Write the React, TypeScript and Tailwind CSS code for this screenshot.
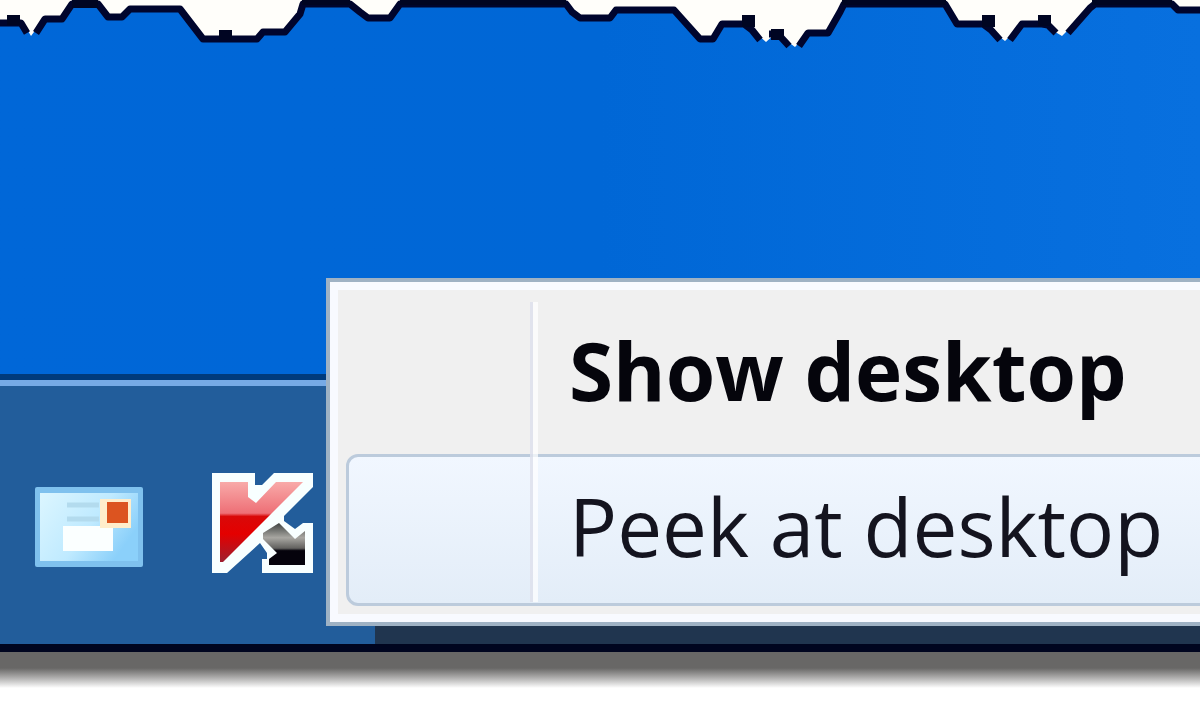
import { clsx } from "clsx";

interface MenuItemProps {
  label: string;
  isDefault?: boolean;
  active?: boolean;
}

function TornEdge() {
  return (
    <svg viewBox="0 0 1200 52" preserveAspectRatio="none" className="block w-full h-[52px]" aria-hidden="true">
      <path
        fill="#fffefa"
        d="M0 0V24H24L31 36L43 20H62L72 4H98L108 17H122L130 9H180L203 38H257L263 32H285L300 14V4H350L362 14L368 18H390L400 4H566L572 14L580 18H610L616 10H674L700 39H713L722 24H746L766 42L776 33L795 47L808 33H828L840 12V4H945L957 24H983L1005 41L1022 24H1042L1062 36L1090 8V4H1172L1178 10H1200V0Z"
      />
      <g fill="none" stroke="#00052d" strokeWidth="7" strokeLinejoin="round">
        <path d="M0 23H21L27 33" />
        <path d="M36 33L45 19H62L72 4H98L108 17H122L130 9H180L203 39H257L263 32H285L300 14L303 4H350L360 12L368 18H390L400 4H566L572 12L580 18H610L616 10H674L700 39H713L722 24H744L752 30L760 40" />
        <path d="M769 34H778L789 46" />
        <path d="M799 46L808 33H828L840 12L844 4H945L957 24H983L991 30L1000 40" />
        <path d="M1010 40L1022 24H1042L1048 25L1056 33" />
        <path d="M1068 33L1090 8L1095 4H1172L1178 10H1200" />
      </g>
      <path fill="#000522" d="M7 15H20V25H7ZM219 30H232V40H219ZM742 15H755V27H742ZM771 29H784V40H771ZM982 15H995V27H982ZM1038 15H1051V26H1038ZM72 0H98V8H72ZM302 0H350V5H302ZM400 0H566V5H400ZM842 0H946V5H842ZM1092 0H1172V5H1092Z" />
    </svg>
  );
}

function MailIcon() {
  return (
    <svg viewBox="0 0 108 80" className="block w-[108px] h-20" aria-hidden="true">
      <defs>
        <linearGradient id="mail" x1="0" y1="0" x2="1" y2="0.5">
          <stop offset="0" stopColor="#dcf6ff" />
          <stop offset="0.6" stopColor="#bfeaff" />
          <stop offset="1" stopColor="#8bd0fa" />
        </linearGradient>
      </defs>
      <rect width="108" height="80" rx="2" fill="#7fc1ee" />
      <rect x="5" y="6" width="98" height="68" fill="url(#mail)" />
      <path d="M32 18H64M32 32H64" stroke="#b3dbee" strokeWidth="5" />
      <rect x="28" y="39" width="50" height="25" fill="#fbffff" />
      <rect x="65" y="12" width="31" height="29" fill="#ffedcb" />
      <rect x="72" y="15" width="21" height="21" fill="#dc5420" />
    </svg>
  );
}

function KasperskyIcon() {
  return (
    <svg viewBox="0 0 104 104" className="block size-[104px]" aria-hidden="true">
      <defs>
        <linearGradient id="letter" x1="0" y1="0" x2="0" y2="1">
          <stop offset="0" stopColor="#f8aaa9" />
          <stop offset="0.39" stopColor="#ee6f76" />
          <stop offset="0.43" stopColor="#d90909" />
          <stop offset="0.65" stopColor="#e40000" />
          <stop offset="1" stopColor="#9e2030" />
        </linearGradient>
        <linearGradient id="arrow" x1="0" y1="0" x2="0" y2="1">
          <stop offset="0" stopColor="#3e4240" />
          <stop offset="0.35" stopColor="#a8a7a2" />
          <stop offset="0.6" stopColor="#62615f" />
          <stop offset="0.66" stopColor="#05030c" />
          <stop offset="1" stopColor="#05030c" />
        </linearGradient>
      </defs>
      <path
        fill="#f8ffff"
        d="M1 2H44V14H51L63 2H102V16L73 45V50L84 58L92 52H102V102H51V88H56V82L49 72L16 102H1Z"
      />
      <path fill="url(#letter)" d="M9 11H37V26L45 32L65 11H92L12 91H9Z" />
      <path fill="url(#arrow)" d="M52 62L68 52L84 68L94 60V94H58V88L66 82L52 68Z" />
    </svg>
  );
}

function MenuItem({ label, isDefault, active }: MenuItemProps) {
  return (
    <button
      type="button"
      role="menuitem"
      className={clsx(
        "flex w-full items-center rounded-xl border-3 pb-2 text-left",
        active
          ? "h-[152px] border-[#bccbdc] bg-linear-to-b from-[#f1f7ff] to-[#e3edf8]"
          : "h-40 border-transparent"
      )}
    >
      <span className="w-[180px] shrink-0" />
      <span
        className={clsx(
          "pl-10 text-[80px] leading-none whitespace-nowrap",
          isDefault ? "font-bold text-[#05050c]" : "font-normal text-[#14141f]"
        )}
      >
        {label}
      </span>
    </button>
  );
}

export default function App() {
  return (
    <div className="relative flex h-screen flex-col overflow-hidden bg-white font-['Open_Sans','Noto_Sans',sans-serif]">
      <main className="flex-1 bg-linear-to-r from-[#0067d8] via-[#0067d6] to-[#0870df]">
        <TornEdge />
      </main>
      <footer className="border-t-6 border-[#003b7c]">
        <div className="flex h-66 items-start gap-[68px] border-t-6 border-[#76aae6] bg-[#225d9b] pt-[85px] pl-[35px]">
          <button type="button" aria-label="Mail" className="mt-4">
            <MailIcon />
          </button>
          <button type="button" aria-label="Kaspersky">
            <KasperskyIcon />
          </button>
        </div>
        <div className="ml-[375px] -mt-5 h-5 bg-[#20354f]" />
        <div className="h-2 bg-[#00051f]" />
        <div className="h-4 bg-[#686766]" />
        <div className="h-5 bg-linear-to-b from-[#686766] to-white" />
        <div className="h-8 bg-white" />
      </footer>

      <div
        role="menu"
        className="absolute bottom-[94px] left-[326px] -right-8 border-4 border-[#9fb2c4] bg-[#f0f0f0] p-4 pt-3 shadow-[inset_0_0_0_8px_#f8faff]"
      >
        <MenuItem label="Show desktop" isDefault />
        <MenuItem label="Peek at desktop" active />
        <span className="pointer-events-none absolute inset-y-5 left-[200px] w-2 border-l-3 border-[#c8cce0]/50 bg-white/70" />
      </div>
    </div>
  );
}
